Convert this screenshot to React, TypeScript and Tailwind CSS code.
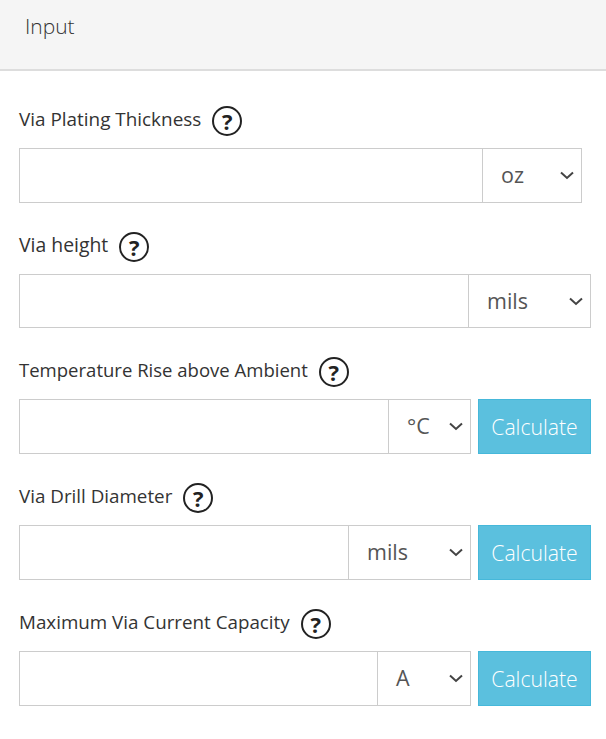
const fields = [
  { label: "Via Plating Thickness", labelSize: "text-[18.9px]", unit: "oz", rowClass: "h-[55px] w-[563px]", unitWidth: "w-[99px]", calculate: false },
  { label: "Via height", labelSize: "text-[19.4px]", unit: "mils", rowClass: "h-[54px] w-[572px]", unitWidth: "w-[122px]", calculate: false },
  { label: "Temperature Rise above Ambient", labelSize: "text-[18.55px]", unit: "°C", rowClass: "h-[55px] w-[572px]", unitWidth: "w-[82px]", calculate: true },
  { label: "Via Drill Diameter", labelSize: "text-[18.8px]", unit: "mils", rowClass: "h-[55px] w-[572px]", unitWidth: "w-[122px]", calculate: true },
  { label: "Maximum Via Current Capacity", labelSize: "text-[18.8px]", unit: "A", rowClass: "h-[55px] w-[572px]", unitWidth: "w-[93px]", calculate: true },
];

function HelpIcon() {
  return (
    <span className="flex h-[30px] w-[30px] shrink-0 items-center justify-center rounded-full border-2 border-[#222] text-[22px] leading-none font-bold text-[#222]">
      ?
    </span>
  );
}

function Chevron() {
  return (
    <svg width="14" height="9" viewBox="0 0 14 9" fill="none" className="shrink-0">
      <path d="M1 1.5 L7 7 L13 1.5" stroke="#444" strokeWidth="2" />
    </svg>
  );
}

export default function App() {
  return (
    <div className="min-h-[739px] bg-white font-['Open_Sans',sans-serif]">
      {/* Panel heading */}
      <div className="h-[71px] border-b-2 border-[#ddd] bg-[#f5f5f5] pt-[10px] pl-[25px] text-[21px] leading-[32px] font-light text-[#333]">
        Input
      </div>

      <div className="flex flex-col gap-[29px] pt-[35px] pl-[19px]">
        {fields.map((field) => (
          <div key={field.label}>
            <div className="mb-[12px] flex h-[30px] items-center gap-[11px]">
              <span className={`pb-[4px] leading-[26px] text-[#333] ${field.labelSize}`}>{field.label}</span>
              <HelpIcon />
            </div>
            <div className={`flex gap-[7px] ${field.rowClass}`}>
              <div className="flex min-w-0 flex-1 border border-[#ccc]">
                <input type="text" className="min-w-0 flex-1 bg-white outline-none" />
                <div className={`flex shrink-0 items-center justify-between border-l border-[#ccc] pr-[7px] pl-[18px] ${field.unitWidth}`}>
                  <span className="text-[21.5px] text-[#555]">{field.unit}</span>
                  <Chevron />
                </div>
              </div>
              {field.calculate && (
                <button className="w-[113px] shrink-0 border border-[#46b8da] bg-[#5bc0de] text-[21.2px] font-light text-white">
                  Calculate
                </button>
              )}
            </div>
          </div>
        ))}
      </div>
    </div>
  );
}
